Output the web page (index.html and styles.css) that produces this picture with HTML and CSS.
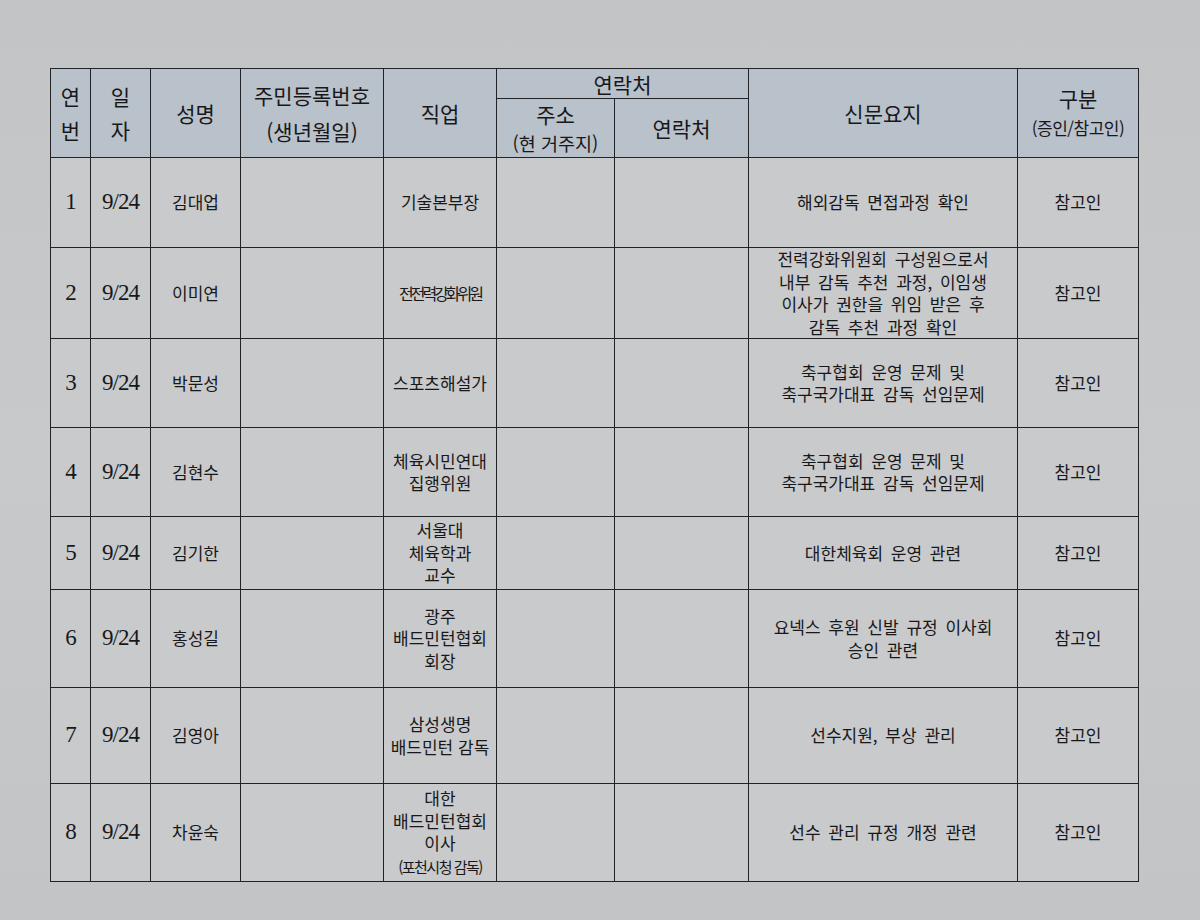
FILE: index.html
```html
<!DOCTYPE html>
<html lang="ko">
<head>
<meta charset="utf-8">
<link rel="stylesheet" href="styles.css">
</head>
<body>
<div class="page">
<table class="sheet">
  <colgroup>
    <col class="c-no"><col class="c-date"><col class="c-name"><col class="c-id"><col class="c-job"><col class="c-addr"><col class="c-tel"><col class="c-sum"><col class="c-type">
  </colgroup>
  <thead>
    <tr class="h1">
      <th rowspan="2" class="stack">연<br>번</th>
      <th rowspan="2" class="stack">일<br>자</th>
      <th rowspan="2">성명</th>
      <th rowspan="2" class="two">주민등록번호<br>(생년월일)</th>
      <th rowspan="2">직업</th>
      <th colspan="2">연락처</th>
      <th rowspan="2">신문요지</th>
      <th rowspan="2" class="type-h">구분<br><span class="small">(증인/참고인)</span></th>
    </tr>
    <tr class="h2">
      <th class="addr-h">주소<br><span class="sub">(현 거주지)</span></th>
      <th>연락처</th>
    </tr>
  </thead>
  <tbody>
    <tr class="r90">
      <td class="num">1</td><td class="num">9/24</td><td>김대업</td><td></td><td>기술본부장</td><td></td><td></td><td class="sum">해외감독 면접과정 확인</td><td>참고인</td>
    </tr>
    <tr class="r90">
      <td class="num">2</td><td class="num">9/24</td><td>이미연</td><td></td><td><span class="tight">전전력강화위원</span></td><td></td><td></td><td class="sum">전력강화위원회 구성원으로서<br>내부 감독 추천 과정, 이임생<br>이사가 권한을 위임 받은 후<br>감독 추천 과정 확인</td><td>참고인</td>
    </tr>
    <tr class="r89">
      <td class="num">3</td><td class="num">9/24</td><td>박문성</td><td></td><td>스포츠해설가</td><td></td><td></td><td class="sum">축구협회 운영 문제 및<br>축구국가대표 감독 선임문제</td><td>참고인</td>
    </tr>
    <tr class="r89">
      <td class="num">4</td><td class="num">9/24</td><td>김현수</td><td></td><td>체육시민연대<br>집행위원</td><td></td><td></td><td class="sum">축구협회 운영 문제 및<br>축구국가대표 감독 선임문제</td><td>참고인</td>
    </tr>
    <tr class="r73">
      <td class="num">5</td><td class="num">9/24</td><td>김기한</td><td></td><td>서울대<br>체육학과<br>교수</td><td></td><td></td><td class="sum">대한체육회 운영 관련</td><td>참고인</td>
    </tr>
    <tr class="r98">
      <td class="num">6</td><td class="num">9/24</td><td>홍성길</td><td></td><td>광주<br>배드민턴협회<br>회장</td><td></td><td></td><td class="sum">요넥스 후원 신발 규정 이사회<br>승인 관련</td><td>참고인</td>
    </tr>
    <tr class="r96">
      <td class="num">7</td><td class="num">9/24</td><td>김영아</td><td></td><td>삼성생명<br>배드민턴 감독</td><td></td><td></td><td class="sum">선수지원, 부상 관리</td><td>참고인</td>
    </tr>
    <tr class="r98">
      <td class="num">8</td><td class="num">9/24</td><td>차윤숙</td><td></td><td>대한<br>배드민턴협회<br>이사<br><span class="tight2">(포천시청 감독)</span></td><td></td><td></td><td class="sum">선수 관리 규정 개정 관련</td><td>참고인</td>
    </tr>
  </tbody>
</table>
</div>
</body>
</html>
```

FILE: styles.css
```css
html, body {
  margin: 0;
  padding: 0;
  background: #c4c6c7;
}
.page {
  width: 1200px;
  height: 920px;
  padding: 68px 0 0 50px;
  box-sizing: border-box;
  background: linear-gradient(180deg, #c2c4c5 0%, #c7c9ca 50%, #c2c4c5 100%);
}
.sheet {
  border-collapse: collapse;
  table-layout: fixed;
  width: 1088px;
  font-family: "Noto Sans CJK KR", "Noto Sans", sans-serif;
  color: #18181a;
}
.c-no { width: 40px; }
.c-date { width: 60px; }
.c-name { width: 90px; }
.c-id { width: 143px; }
.c-job { width: 113px; }
.c-addr { width: 118px; }
.c-tel { width: 134px; }
.c-sum { width: 269px; }
.c-type { width: 121px; }

.sheet th, .sheet td {
  border: 1.5px solid #222326;
  padding: 0;
  text-align: center;
  vertical-align: middle;
}
.sheet th {
  background: #b9c1cb;
  font-weight: 400;
  font-size: 21px;
  line-height: 28px;
}
.h1 { height: 30px; }
.h2 { height: 59px; }
.h1 th.stack { line-height: 34px; }
.h1 th.two { line-height: 36px; }
.addr-h { line-height: 27px; }
.addr-h .sub { font-size: 18.5px; }
.type-h { line-height: 42px; }
.type-h .small {
  font-size: 17px;
  letter-spacing: -0.5px;
}
.sheet td {
  background: #c9cacb;
  font-size: 17px;
  line-height: 22.5px;
}
.sheet td.num {
  font-family: "Liberation Serif", "Noto Serif", serif;
  font-size: 23px;
  letter-spacing: -1px;
}
.sheet td.sum {
  word-spacing: 3px;
}
.tight { letter-spacing: -3px; font-size: 16px; }
.tight2 { letter-spacing: -1.5px; font-size: 15px; }
.r90 { height: 90px; }
.r89 { height: 89px; }
.r73 { height: 73px; }
.r98 { height: 98px; }
.r96 { height: 96px; }
```
